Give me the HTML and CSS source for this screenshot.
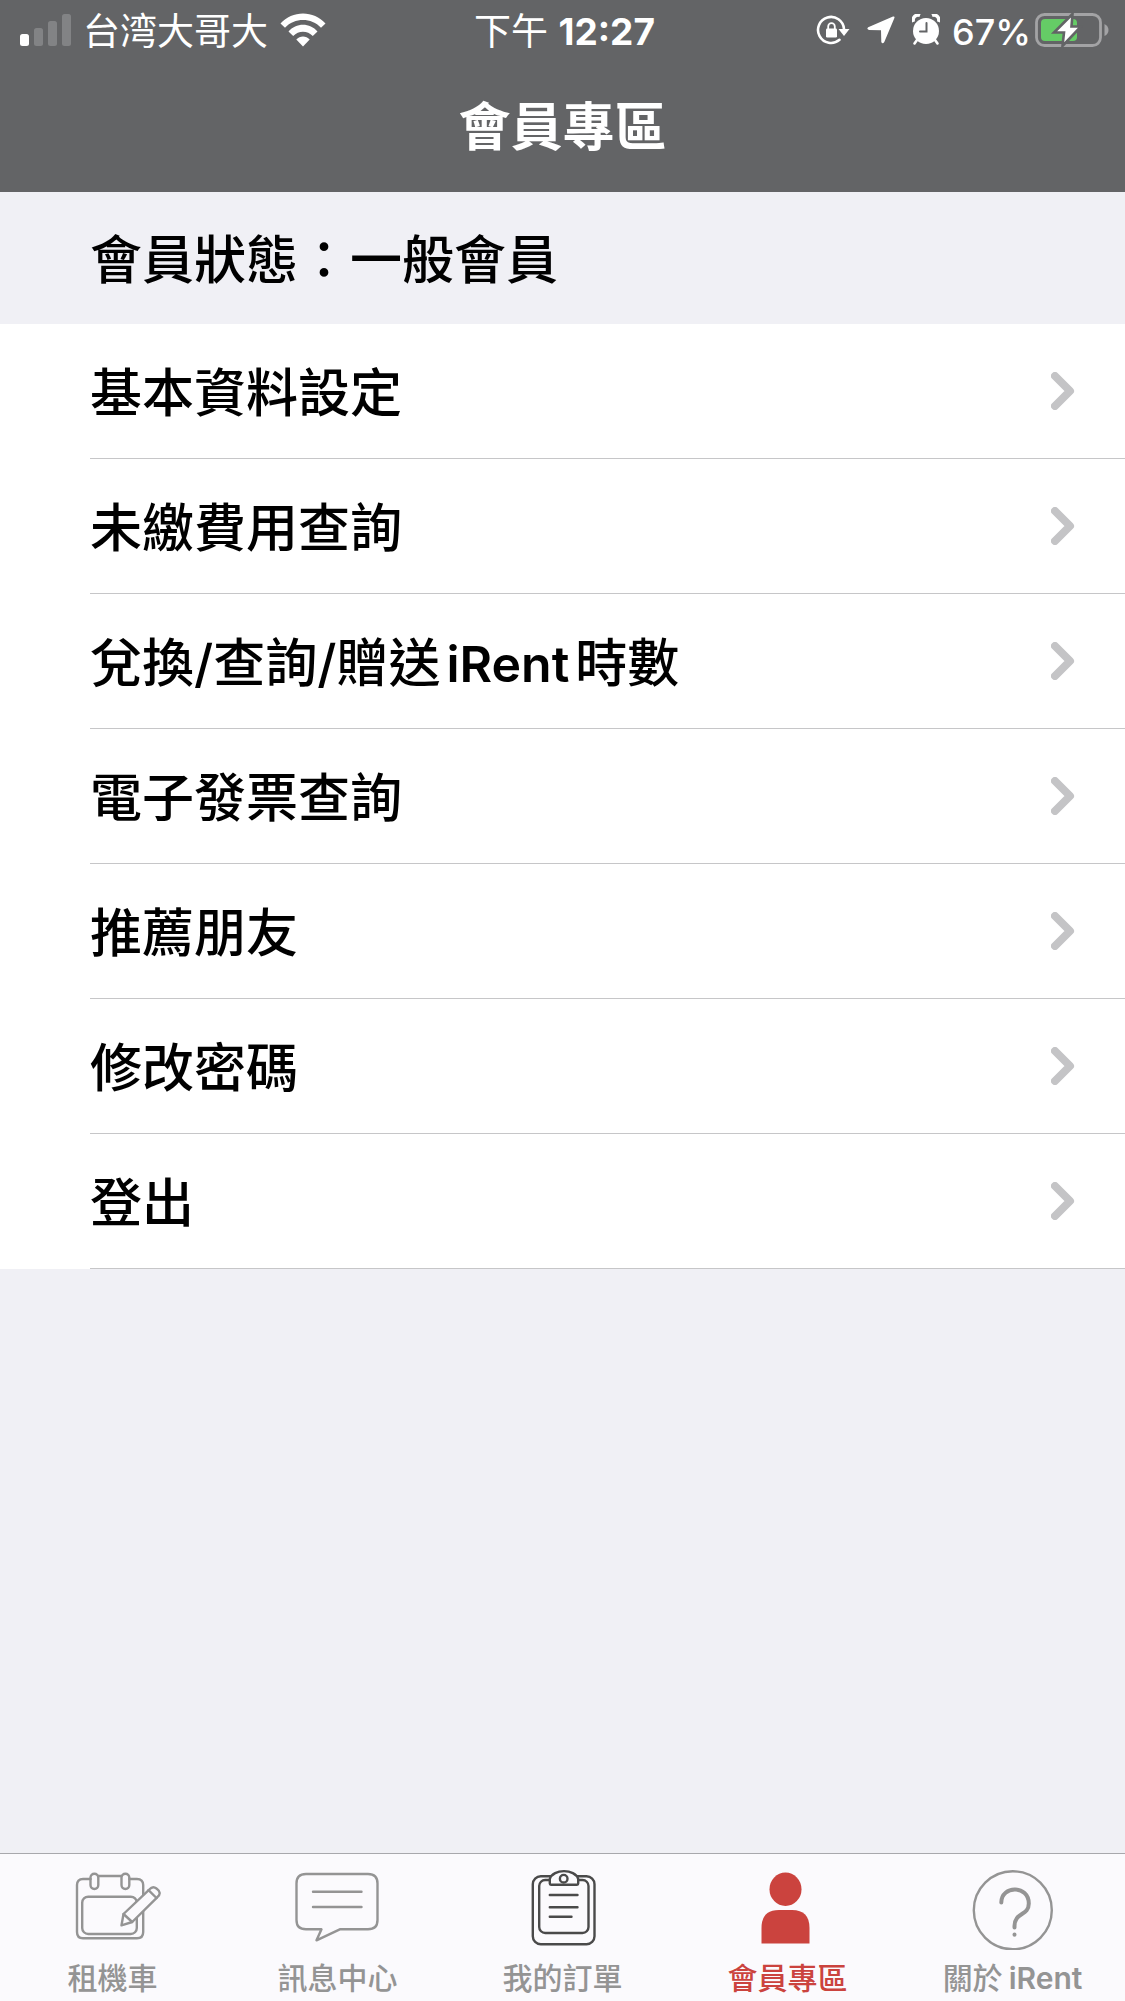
FILE: index.html
```html
<!DOCTYPE html>
<html lang="zh-Hant-TW">
    <head>
        <meta charset="UTF-8" />
        <meta name="viewport" content="width=device-width, initial-scale=1.0" />
        <title>會員專區</title>
        <link rel="stylesheet" href="styles.css">
    </head>
    <body>
        <header class="top">
            <div class="status-bar">
                <div class="status-left">
                    <svg class="signal" width="51" height="32" viewBox="0 0 51 32">
                        <rect x="0" y="20" width="9" height="12" rx="2.5" />
                        <g opacity="0.2">
                            <rect x="14" y="14" width="9" height="18" rx="2.5" />
                            <rect x="28" y="7" width="9" height="25" rx="2.5" />
                            <rect x="42" y="0" width="9" height="32" rx="2.5" />
                        </g>
                    </svg>
                    <span>台湾大哥大</span>
                    <svg class="wifi" width="46" height="34" viewBox="0 0 46 34">
                        <path d="M0.5 10.5 C12-3 34-3 45.500 10.500 L41 14.800 C31.500 4.500 14.500 4.500 5 14.800 Z" />
                        <path d="M8.500 18.500 C16 9.500 30 9.500 37.500 18.500 L32.800 23 C27.500 17.200 18.500 17.200 13.200 23 Z" />
                        <path d="M16.300 26.500 C20 22.400 26 22.400 29.700 26.500 L23 33.500 Z" />
                    </svg>
                </div>
                <div class="status-time"><span>下午 <b>12:27</b></span></div>
                <div class="status-right">
                    <svg width="34" height="34" viewBox="0 0 34 34">
                        <path d="M23.500 26.800 A13 13 0 1 1 28 16" fill="none" stroke="#fff" stroke-width="2.600" stroke-linecap="round" />
                        <path d="M22.500 16 H33.500 L28 23 Z" />
                        <rect x="10" y="15.500" width="11" height="9" rx="1.200" />
                        <path d="M12.200 16 V13.500 A3.300 3.300 0 0 1 18.800 13.500 V16" fill="none" stroke="#fff" stroke-width="1.800" />
                    </svg>
                    <svg class="arrow" width="28" height="28" viewBox="0 0 28 28">
                        <path d="M26 0.600 Q28 0 27.400 2 L17.300 26 Q15.500 28.500 14.300 26 L14 14.300 L2 14 Q-0.800 13 1.200 11.300 Z" />
                    </svg>
                    <svg width="28" height="32" viewBox="0 0 28 32">
                        <circle cx="14" cy="17" r="13" />
                        <path d="M1.500 8 A5 5 0 0 1 8 1.500 M20 1.500 A5 5 0 0 1 26.500 8" fill="none" stroke="#fff" stroke-width="3.500" />
                        <path d="M5 26 L2.500 29.500 M23 26 L25.500 29.500" stroke="#fff" stroke-width="2.600" stroke-linecap="round" />
                        <path d="M14.500 9 V17.500 H8" fill="none" stroke="#636466" stroke-width="2" stroke-linecap="round" />
                    </svg>
                    <span class="percent">67%</span>
                    <svg class="battery" width="74" height="36" viewBox="0 0 74 36">
                        <rect x="1.500" y="2.500" width="64" height="31" rx="8" fill="none" stroke="#a3a3a5" stroke-width="2.800" />
                        <path d="M69.500 12 Q73.500 14 73.500 18 Q73.500 22 69.500 24 Z" fill="#a3a3a5" />
                        <rect x="6" y="7" width="36" height="22" rx="4" fill="#65cc66" />
                        <path d="M37.500 2 L19 20.500 H29 L27.500 34 L46 14.500 H36.500 Z" fill="#fff" stroke="#636466" stroke-width="2.600" />
                    </svg>
                </div>
            </div>
            <h1 class="title">會員專區</h1>
        </header>

        <main class="content">
            <h2 class="member-status">會員狀態：一般會員</h2>
            <ul class="menu">
                <li><a href="#profile"><span class="label">基本資料設定</span><svg class="chevron" viewBox="0 0 24 38"><path d="M4 4 L19 19 L4 34" /></svg></a></li>
                <li><a href="#unpaid"><span class="label">未繳費用查詢</span><svg class="chevron" viewBox="0 0 24 38"><path d="M4 4 L19 19 L4 34" /></svg></a></li>
                <li><a href="#hours"><span class="label">兌換/查詢/贈送<span class="latin">iRent</span>時數</span><svg class="chevron" viewBox="0 0 24 38"><path d="M4 4 L19 19 L4 34" /></svg></a></li>
                <li><a href="#invoice"><span class="label">電子發票查詢</span><svg class="chevron" viewBox="0 0 24 38"><path d="M4 4 L19 19 L4 34" /></svg></a></li>
                <li><a href="#refer"><span class="label">推薦朋友</span><svg class="chevron" viewBox="0 0 24 38"><path d="M4 4 L19 19 L4 34" /></svg></a></li>
                <li><a href="#password"><span class="label">修改密碼</span><svg class="chevron" viewBox="0 0 24 38"><path d="M4 4 L19 19 L4 34" /></svg></a></li>
                <li><a href="#logout"><span class="label">登出</span><svg class="chevron" viewBox="0 0 24 38"><path d="M4 4 L19 19 L4 34" /></svg></a></li>
            </ul>
        </main>

        <nav class="tabs">
            <a class="tab" href="#rent">
                <svg viewBox="0 0 96 84">
                    <path d="M25.500 13 H18 Q12 13 12 19 V66 Q12 72.300 18 72.300 H72 Q78.200 72.300 78.200 66 V19 Q78.200 13 72 13 H64.500 M33.500 10 H56.500" />
                    <rect x="25.500" y="7.700" width="7.800" height="15.300" rx="3.900" />
                    <rect x="56.500" y="7.700" width="7.800" height="15.300" rx="3.900" />
                    <rect x="17.200" y="30.700" width="54.600" height="37.300" rx="6" />
                    <path class="solid" d="M56.500 59.300 L58.500 48 L84.500 23.300 Q87.800 19.500 91.500 22.500 Q97.500 27 92.200 31.300 L67.200 56 Z" />
                    <path d="M58.500 48 L67.200 56 M83.500 24.200 L91.500 32" />
                </svg>
                <span>租機車</span>
            </a>
            <a class="tab" href="#messages">
                <svg viewBox="0 0 96 84">
                    <path d="M16 8 H78 Q87.500 8 87.500 17.500 V54 Q87.500 63.300 78 63.300 H49.800 L26.500 74.300 L31.500 63.300 H16 Q6.500 63.300 6.500 54 V17.500 Q6.500 8 16 8 Z" />
                    <path d="M23 25.700 H71.500 M23 41 H71.500" />
                </svg>
                <span>訊息中心</span>
            </a>
            <a class="tab" href="#orders">
                <svg class="dark" viewBox="0 0 96 84">
                    <rect x="17.800" y="10.300" width="61.700" height="68" rx="8" />
                    <rect x="24.200" y="14" width="49.300" height="53" rx="6" />
                    <path class="solid" d="M36 18.700 Q34.800 18.700 34.800 17.500 V13 C38 2.500 60 2.500 63.200 13 V17.500 Q63.200 18.700 62 18.700 Z" />
                    <circle cx="48.700" cy="12.700" r="3.800" />
                    <path d="M34.800 29 H62.500 M34.800 41.300 H62.500 M34.800 50.700 H56.500" />
                </svg>
                <span>我的訂單</span>
            </a>
            <a class="tab active" href="#member" aria-current="page">
                <svg viewBox="0 0 96 84">
                    <ellipse cx="45.500" cy="23.300" rx="16" ry="16.700" />
                    <path d="M21.500 77.500 V62 Q21.500 44 39 44 H52 Q69.500 44 69.500 62 V77.500 Z" />
                </svg>
                <span>會員專區</span>
            </a>
            <a class="tab" href="#about">
                <svg viewBox="0 0 96 84">
                    <circle cx="47.800" cy="44.300" r="39" />
                    <path class="thick" d="M36.300 36.500 C36.300 19 63.800 19 63.800 37.500 C63.800 50 49.500 46 49.500 60 V61.500" />
                    <path class="thick" d="M49.500 68.600 V68.700" />
                </svg>
                <span>關於<span class="latin">iRent</span></span>
            </a>
        </nav>
    </body>
</html>
```

FILE: styles.css
```css
* {
    box-sizing: border-box;
}

body {
    display: flex;
    flex-direction: column;
    min-height: 100vh;
    margin: 0;
    font-family: Inter, "Noto Sans CJK TC", sans-serif;
    color: #000;
    background-color: #f0f0f5;
}

a {
    color: inherit;
    text-decoration: none;
}

svg {
    flex-shrink: 0;
}

/* header */
.top {
    color: #fff;
    background-color: #636466;
}

.status-bar {
    display: grid;
    grid-template-columns: 1fr auto 1fr;
    align-items: center;
    height: 60px;
    padding: 0 16px 0 20px;
    font-size: 37px;
    line-height: 56px;
}

.status-bar svg {
    fill: #fff;
}

.status-bar span {
    display: block;
    padding-top: 4px;
}

.status-left,
.status-right {
    display: flex;
    align-items: center;
}

.status-left {
    gap: 12px;
}

.status-right {
    justify-content: flex-end;
    gap: 17px;
    font-size: 36px;
    font-weight: 500;
}

.percent {
    margin-left: -5px;
}

.battery {
    margin-left: -13px;
}

.title,
.member-status {
    margin: 0;
    font-size: 52px;
}

.title {
    padding-top: 4px;
    font-weight: 700;
    line-height: 128px;
    text-align: center;
}

/* member menu */
.content {
    flex: 1;
}

.member-status {
    padding: 6px 0 0 90px;
    font-weight: 500;
    line-height: 126px;
}

.menu {
    margin: 0;
    padding: 0 0 0 90px;
    list-style: none;
    background-color: #fff;
}

.menu a {
    display: flex;
    align-items: center;
    justify-content: space-between;
    padding-right: 50px;
    border-bottom: 1px solid #c6c6c8;
    font-size: 52px;
    font-weight: 500;
    line-height: 128px;
}

.label {
    padding-top: 6px;
}

.latin {
    margin: 0 6px;
    font-size: 50px;
    font-weight: 600;
}

.chevron {
    width: 24px;
    height: 38px;
    fill: none;
    stroke: #c4c4c6;
    stroke-width: 8px;
    stroke-linecap: round;
    stroke-linejoin: round;
}

/* bottom tabs */
.tabs {
    display: grid;
    grid-template-columns: repeat(5, 1fr);
    border-top: 1px solid #a8a8ac;
    background-color: #fbfafd;
}

.tab {
    display: flex;
    flex-direction: column;
    align-items: center;
    padding-top: 12px;
    font-size: 30px;
    font-weight: 500;
    line-height: 45px;
    color: #949494;
}

.tab > span {
    padding-top: 6px;
}

.tab .latin {
    margin: 0 0 0 6px;
    font-size: 30px;
}

.tab svg {
    width: 96px;
    height: 84px;
    fill: none;
    stroke: #949494;
    stroke-width: 2.4px;
    stroke-linecap: round;
    stroke-linejoin: round;
}

.tab .dark {
    stroke: #4a4a4a;
}

.tab .solid {
    fill: #fbfafd;
}

.tab .thick {
    stroke-width: 4px;
}

.tab.active {
    color: #cb433e;
}

.tab.active svg {
    fill: #cb433e;
    stroke: none;
}
```
